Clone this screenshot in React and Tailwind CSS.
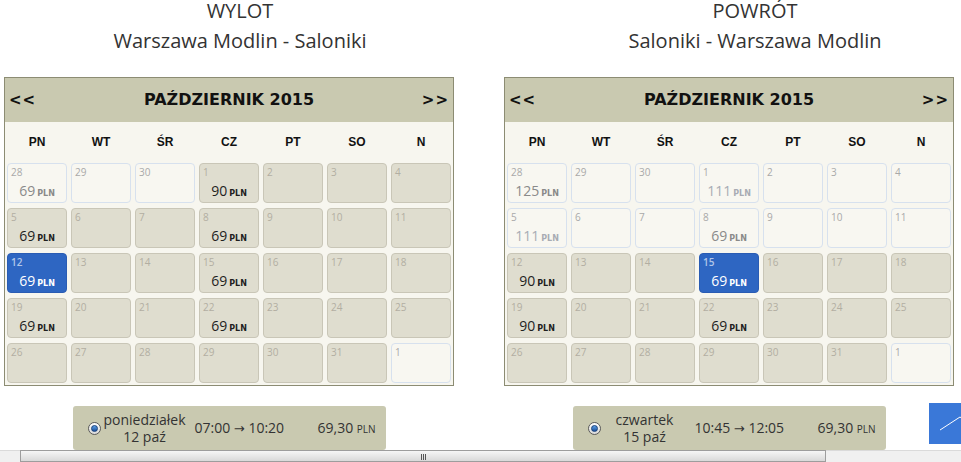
import React from "react";

const L = "light";
const D = "dark";
const S = "sel";

const outbound = [
  [[28, L, "69", "c1"], [29, L], [30, L], [1, D, "90"], [2, D], [3, D], [4, D]],
  [[5, D, "69"], [6, D], [7, D], [8, D, "69"], [9, D], [10, D], [11, D]],
  [[12, S, "69"], [13, D], [14, D], [15, D, "69"], [16, D], [17, D], [18, D]],
  [[19, D, "69"], [20, D], [21, D], [22, D, "69"], [23, D], [24, D], [25, D]],
  [[26, D], [27, D], [28, D], [29, D], [30, D], [31, D], [1, L]],
];

const inbound = [
  [[28, L, "125", "c1"], [29, L], [30, L], [1, L, "111", "c2"], [2, L], [3, L], [4, L]],
  [[5, L, "111", "c2"], [6, L], [7, L], [8, L, "69", "c1"], [9, L], [10, L], [11, L]],
  [[12, D, "90"], [13, D], [14, D], [15, S, "69"], [16, D], [17, D], [18, D]],
  [[19, D, "90"], [20, D], [21, D], [22, D, "69"], [23, D], [24, D], [25, D]],
  [[26, D], [27, D], [28, D], [29, D], [30, D], [31, D], [1, L]],
];

const dayNames = ["PN", "WT", "ŚR", "CZ", "PT", "SO", "N"];

function Cell({ day, kind, price, tone }) {
  const box =
    kind === S
      ? "bg-[#2e66c2] border-[#2a5cb3]"
      : kind === L
      ? "bg-[#f8f7f1] border-[#d7e1ee]"
      : "bg-[#dfddcf] border-[#c9c6b7]";
  const numColor =
    kind === S ? "text-[#b3c7e9]" : kind === L ? "text-[#a9a9a9]" : "text-[#b2aea2]";
  const priceColor =
    kind === S
      ? "text-white"
      : tone === "c1"
      ? "text-[#8a8a8a]"
      : tone === "c2"
      ? "text-[#a8acb4]"
      : "text-[#1f1f1f]";
  return (
    <div className={`h-[40px] rounded-[4px] border ${box} flex flex-col`}>
      <div
        className={`pl-[3px] pt-[2px] text-[10px] leading-[12px] font-['Open_Sans',sans-serif] ${numColor} ${kind === S ? "font-semibold" : ""}`}
      >
        {day}
      </div>
      {price && (
        <div className={`flex items-baseline justify-center mt-[4px] ${priceColor}`}>
          <span className="text-[14px] leading-[18px] font-['Open_Sans',sans-serif]">{price}</span>
          <span className="ml-[2px] text-[8px] font-bold font-['DejaVu_Sans',sans-serif]">PLN</span>
        </div>
      )}
    </div>
  );
}

function Calendar({ weeks }) {
  return (
    <div className="w-[450px] border border-[#8c8c73] bg-[#f7f6ef]">
      <div className="h-[44px] bg-[#c9c9b0] flex items-center justify-between px-[4px] font-['DejaVu_Sans',sans-serif] font-bold text-[#111]">
        <span className="text-[15px] tracking-[1px]">&lt;&lt;</span>
        <span className="text-[16px]">PAŹDZIERNIK 2015</span>
        <span className="text-[15px] tracking-[1px]">&gt;&gt;</span>
      </div>
      <div className="grid grid-cols-7 h-[39px] items-center">
        {dayNames.map((d) => (
          <div
            key={d}
            className="text-center text-[12px] font-bold text-[#111] font-['Liberation_Sans',sans-serif]"
          >
            {d}
          </div>
        ))}
      </div>
      <div className="grid grid-cols-[repeat(7,60px)] gap-x-[4px] gap-y-[5px] px-[2px] pt-[2px] pb-[2px]">
        {weeks.flat().map(([day, kind, price, tone], i) => (
          <Cell key={i} day={day} kind={kind} price={price} tone={tone} />
        ))}
      </div>
    </div>
  );
}

function Radio() {
  return (
    <div className="shrink-0 w-[13px] h-[13px] rounded-full border border-[#5a5a5a] bg-gradient-to-b from-[#ffffff] to-[#d8d8d8] flex items-center justify-center">
      <div className="w-[7px] h-[7px] rounded-full bg-gradient-to-b from-[#5da0e8] to-[#1a4f9a] border border-[#163f7a]" />
    </div>
  );
}

function Flight({ day, date, from, to }) {
  return (
    <div className="mx-auto w-[313px] h-[44px] rounded-[3px] bg-[#c9c9b0] flex items-center pl-[15px] font-['Open_Sans',sans-serif] text-[14px] text-[#333] leading-[17px]">
      <Radio />
      <div className="w-[88px] text-center">
        <div>{day}</div>
        <div>{date}</div>
      </div>
      <div className="ml-[6px] w-[100px] whitespace-nowrap">
        {from} <span className="font-['DejaVu_Sans',sans-serif] text-[13px]">→</span> {to}
      </div>
      <div className="ml-[23px] whitespace-nowrap">
        69,30 <span className="text-[10px]">PLN</span>
      </div>
    </div>
  );
}

function Column({ width, label, route, weeks, flight }) {
  return (
    <div className={`${width} shrink-0`}>
      <div className="text-center font-['Open_Sans',sans-serif] text-[20px] leading-[22px] text-[#333]">
        <div>{label}</div>
        <div className="mt-[8px]">{route}</div>
      </div>
      <div className="mt-[25px] pl-[4px]">
        <Calendar weeks={weeks} />
        <div className="w-[450px] mt-[20px]">{flight}</div>
      </div>
    </div>
  );
}

export default function App() {
  return (
    <div className="relative w-[961px] h-[462px] overflow-hidden bg-white">
      <div className="flex gap-[20px]">
        <Column
          width="w-[480px]"
          label="WYLOT"
          route="Warszawa Modlin - Saloniki"
          weeks={outbound}
          flight={<Flight day="poniedziałek" date="12 paź" from="07:00" to="10:20" />}
        />
        <Column
          width="w-[510px]"
          label="POWRÓT"
          route="Saloniki - Warszawa Modlin"
          weeks={inbound}
          flight={<Flight day="czwartek" date="15 paź" from="10:45" to="12:05" />}
        />
      </div>

      {/* back-to-top button */}
      <div className="absolute left-[929px] top-[403px] w-[62px] h-[41px] bg-[#3a78d8]">
        <svg className="absolute left-0 top-0" width="62" height="41" viewBox="0 0 62 41">
          <polyline points="11,27 31,14 51,27" fill="none" stroke="#fff" strokeWidth="1" />
        </svg>
      </div>

      {/* horizontal scrollbar */}
      <div className="absolute left-0 bottom-0 w-full h-[12px] bg-[#f0f0f0] border-t border-[#dadada]">
        <div className="absolute left-[20px] top-[-1px] w-[806px] h-[12px] border border-[#9d9d9d] bg-gradient-to-b from-[#f6f6f6] to-[#d9d9d9] flex justify-center items-center">
          <div className="flex gap-[1px] mt-[2px]">
            <div className="w-[1px] h-[6px] bg-[#555]" />
            <div className="w-[1px] h-[6px] bg-[#555]" />
            <div className="w-[1px] h-[6px] bg-[#555]" />
          </div>
        </div>
      </div>
    </div>
  );
}
